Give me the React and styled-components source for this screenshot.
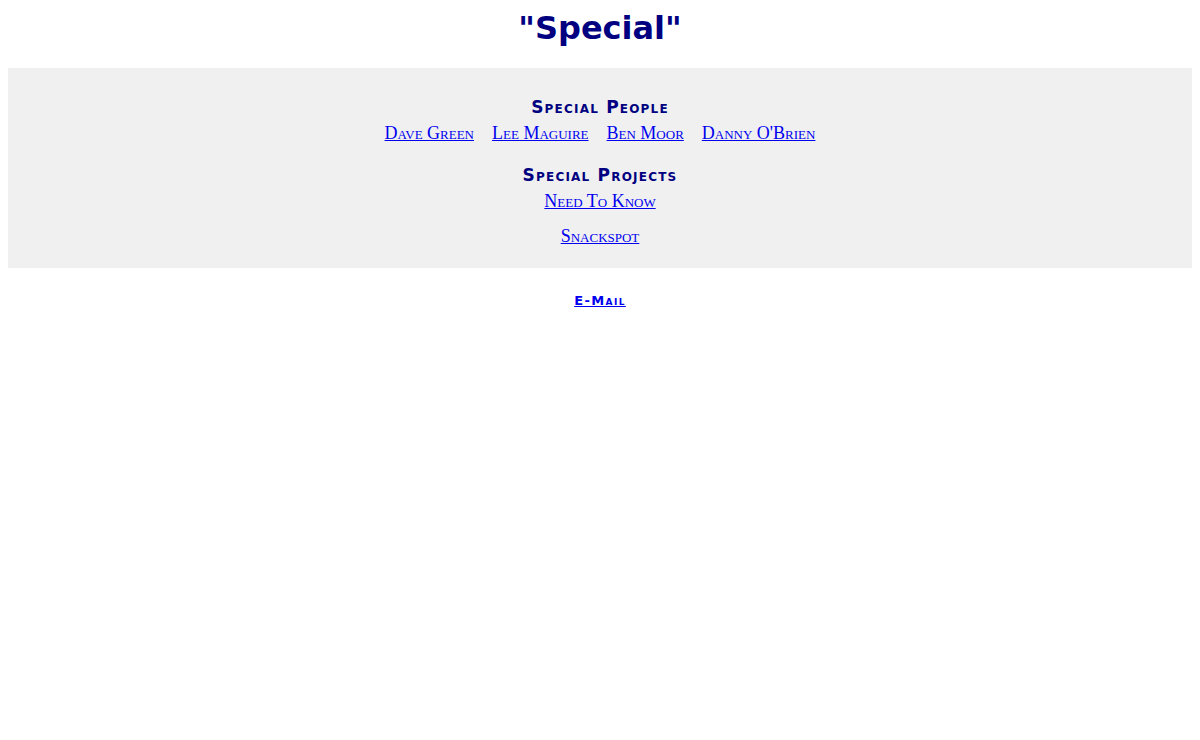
import React from "react";
import styled, { createGlobalStyle } from "styled-components";

const GlobalStyle = createGlobalStyle`
  body {
    margin: 8px;
    background: #ffffff;
    font-family: "DejaVu Sans", Verdana, sans-serif;
  }
`;

const people = ["Dave Green", "Lee Maguire", "Ben Moor", "Danny O'Brien"];
const projects = ["Need To Know", "Snackspot"];

const App = () => {
  return (
    <>
      <GlobalStyle />
      <Page>
        <Title>"Special"</Title>
        <Panel>
          <SectionTitle>Special People</SectionTitle>
          <LinkRow>
            {people.map((name) => (
              <NavLink key={name} href="#">
                {name}
              </NavLink>
            ))}
          </LinkRow>
          <SectionTitle $top={21}>Special Projects</SectionTitle>
          <ProjectList>
            {projects.map((name) => (
              <NavLink key={name} href="#">
                {name}
              </NavLink>
            ))}
          </ProjectList>
        </Panel>
        <Footer>
          <MailLink href="#">E-Mail</MailLink>
        </Footer>
      </Page>
    </>
  );
};

const Page = styled.div`
  display: flex;
  flex-direction: column;
  align-items: stretch;
`;

const Title = styled.h1`
  margin: 0 0 20px;
  height: 40px;
  line-height: 40px;
  text-align: center;
  font-family: "DejaVu Sans", Verdana, sans-serif;
  font-size: 32px;
  font-weight: bold;
  color: #000080;
`;

const Panel = styled.div`
  background: #f0f0f0;
  padding: 29px 0 21px;
  display: flex;
  flex-direction: column;
  align-items: center;
`;

const SectionTitle = styled.h2`
  margin: ${(p) => p.$top || 0}px 0 5px;
  line-height: 20px;
  font-family: "DejaVu Sans", Verdana, sans-serif;
  font-size: 17px;
  font-weight: bold;
  font-variant: small-caps;
  letter-spacing: 1.2px;
  color: #000080;
  text-align: center;
`;

const LinkRow = styled.div`
  display: flex;
  justify-content: center;
  gap: 18px;
`;

const ProjectList = styled.div`
  display: flex;
  flex-direction: column;
  align-items: center;
  gap: 13px;
`;

const NavLink = styled.a`
  line-height: 22px;
  font-family: "Liberation Serif", "Times New Roman", serif;
  font-size: 18px;
  font-variant: small-caps;
  color: #0000ee;
  text-decoration: underline;
`;

const Footer = styled.div`
  margin-top: 22px;
  text-align: center;
  line-height: 20px;
`;

const MailLink = styled.a`
  font-family: "DejaVu Sans", Verdana, sans-serif;
  font-size: 13px;
  font-weight: bold;
  font-variant: small-caps;
  letter-spacing: 1.4px;
  color: #0000ee;
  text-decoration: underline;
`;

export default App;
